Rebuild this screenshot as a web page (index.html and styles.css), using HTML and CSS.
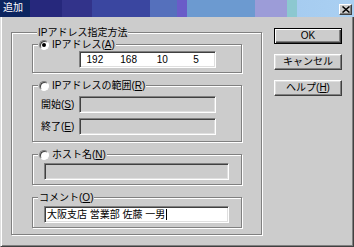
FILE: index.html
```html
<!DOCTYPE html>
<html lang="ja">
<head>
<meta charset="utf-8">
<title>追加</title>
<link rel="stylesheet" href="styles.css">
</head>
<body>
<div class="window">
  <div class="titlebar">
    <span class="title">追加</span>
    <span class="close"><svg width="8" height="7" viewBox="0 0 8 7"><path d="M0.5 0.5 L7.5 6.5 M7.5 0.5 L0.5 6.5" stroke="#000" stroke-width="1.5" fill="none"/></svg></span>
  </div>
  <div class="frame">
    <div class="group outer">
      <div class="glabel">IPアドレス指定方法</div>
      <div class="group sub g1">
        <div class="glabel"><span class="radio checked"></span>IPアドレス(<u>A</u>)</div>
        <div class="field ip"><span>192</span><span>168</span><span>10</span><span>5</span></div>
      </div>
      <div class="group sub g2">
        <div class="glabel"><span class="radio"></span>IPアドレスの範囲(<u>R</u>)</div>
        <div class="row first"><span class="rlabel">開始(<u>S</u>)</span><div class="field disabled wide"></div></div>
        <div class="row"><span class="rlabel">終了(<u>E</u>)</span><div class="field disabled wide"></div></div>
      </div>
      <div class="group sub g3">
        <div class="glabel"><span class="radio"></span>ホスト名(<u>N</u>)</div>
        <div class="field disabled long"></div>
      </div>
      <div class="group sub g4">
        <div class="glabel">コメント(<u>O</u>)</div>
        <div class="field long text">大阪支店 営業部 佐藤 一男<span class="caret"></span></div>
      </div>
    </div>
    <div class="buttons">
      <div class="btn default"><span>OK</span></div>
      <div class="btn"><span>キャンセル</span></div>
      <div class="btn"><span>ヘルプ(<u>H</u>)</span></div>
    </div>
  </div>
</div>
</body>
</html>
```

FILE: styles.css
```css
* { box-sizing: border-box; }
html, body { margin: 0; padding: 0; background: #cccccc; }
body {
  font-family: "Liberation Sans", "Noto Sans CJK JP", sans-serif;
  font-size: 10px;
  color: #000;
}
u { text-decoration: underline; text-underline-offset: 1px; }

.window {
  width: 354px;
  height: 247px;
  display: flex;
  flex-direction: column;
  background: #cccccc;
}

.titlebar {
  height: 17px;
  flex: none;
  display: flex;
  justify-content: space-between;
  align-items: flex-start;
  padding: 0 2px 0 3px;
  background: linear-gradient(to right,
    #0c2560 0px, #0c2560 30px,
    #26287c 30px, #26287c 62px,
    #32338a 62px, #32338a 92px,
    #3a46a0 92px, #3a46a0 150px,
    #5570bc 150px, #5570bc 177px,
    #6a5cc8 177px, #6a5cc8 187px,
    #6c9ad0 187px, #6c9ad0 255px,
    #9c9cd8 255px, #9c9cd8 287px,
    #8cc8d0 287px, #8cc8d0 297px,
    #a6ccf0 297px, #aad0f2 354px);
}
.title {
  color: #fff;
  line-height: 16px;
  font-size: 10px;
}
.close {
  margin-top: 4px;
  width: 13px;
  height: 11px;
  background: #cccccc;
  border-top: 1px solid #fff;
  border-left: 1px solid #fff;
  border-right: 1px solid #404040;
  border-bottom: 1px solid #404040;
  box-shadow: inset -1px -1px 0 #808080;
  display: flex;
  align-items: center;
  justify-content: center;
}
.close svg { display: block; }

.frame {
  flex: 1;
  display: flex;
  align-items: flex-start;
  border-left: 1px solid #dfdfdf;
  border-right: 1px solid #404040;
  border-bottom: 1px solid #404040;
  box-shadow: inset 1px 0 0 #fff, inset -1px -1px 0 #808080;
  padding-left: 10px;
}

.group {
  border: 1px solid #808080;
  box-shadow: inset 1px 1px 0 #fff, 1px 1px 0 #fff;
}
.glabel {
  margin: -6px 0 0 5px;
  padding: 0 1px;
  width: fit-content;
  height: 12px;
  line-height: 12px;
  background: #cccccc;
  display: flex;
  align-items: center;
  white-space: nowrap;
}

.outer {
  width: 251px;
  margin-top: 15px;
  padding: 0 0 6px 20px;
}

.sub {
  width: 210px;
  margin-top: 12px;
}
.g1 { margin-top: 5px; padding-bottom: 4px; }
.g2 { padding-bottom: 6px; }
.g3, .g4 { padding-bottom: 4px; }

.radio {
  width: 10px;
  height: 10px;
  border-radius: 50%;
  background: #fff;
  border: 1px solid;
  border-color: #808080 #fff #fff #808080;
  box-shadow: inset 1px 1px 0 #404040;
  margin-right: 3px;
  display: flex;
  align-items: center;
  justify-content: center;
  flex: none;
}
.radio.checked::after {
  content: "";
  width: 4px;
  height: 4px;
  border-radius: 50%;
  background: #000;
}

.field {
  height: 17px;
  background: #fff;
  border-top: 1px solid #808080;
  border-left: 1px solid #808080;
  border-right: 1px solid #fff;
  border-bottom: 1px solid #fff;
  box-shadow: inset 1px 1px 0 #404040, inset -1px -1px 0 #dfdfdf;
}
.field.disabled { background: #cccccc; }

.ip {
  width: 137px;
  margin-left: 46px;
  display: grid;
  grid-template-columns: repeat(4, 1fr);
  align-items: center;
  line-height: 15px;
}
.ip span {
  text-align: center;
  padding-right: 4px;
}

.row {
  display: flex;
  align-items: center;
  margin-top: 5px;
}
.row.first { margin-top: 4px; }
.rlabel {
  width: 46px;
  padding-left: 8px;
  white-space: nowrap;
  line-height: 12px;
}
.wide { width: 137px; }

.long {
  width: 185px;
  margin: 2px 0 0 11px;
}
.text {
  padding-left: 2px;
  line-height: 15px;
  display: flex;
  align-items: center;
  white-space: pre;
}
.caret {
  width: 1px;
  height: 11px;
  background: #000;
  margin-left: 1px;
}

.buttons {
  margin-left: 12px;
  padding-top: 11px;
  display: flex;
  flex-direction: column;
  gap: 10px;
}
.btn {
  width: 68px;
  height: 16px;
  border-top: 1px solid #fff;
  border-left: 1px solid #fff;
  border-right: 1px solid #404040;
  border-bottom: 1px solid #404040;
  box-shadow: inset -1px -1px 0 #808080, inset 1px 1px 0 #dfdfdf;
  display: flex;
  align-items: center;
  justify-content: center;
  line-height: 12px;
  white-space: nowrap;
}
.btn.default {
  border: 1px solid #000;
  box-shadow: inset 1px 1px 0 #fff, inset -1px -1px 0 #404040, inset -2px -2px 0 #808080;
}
```
